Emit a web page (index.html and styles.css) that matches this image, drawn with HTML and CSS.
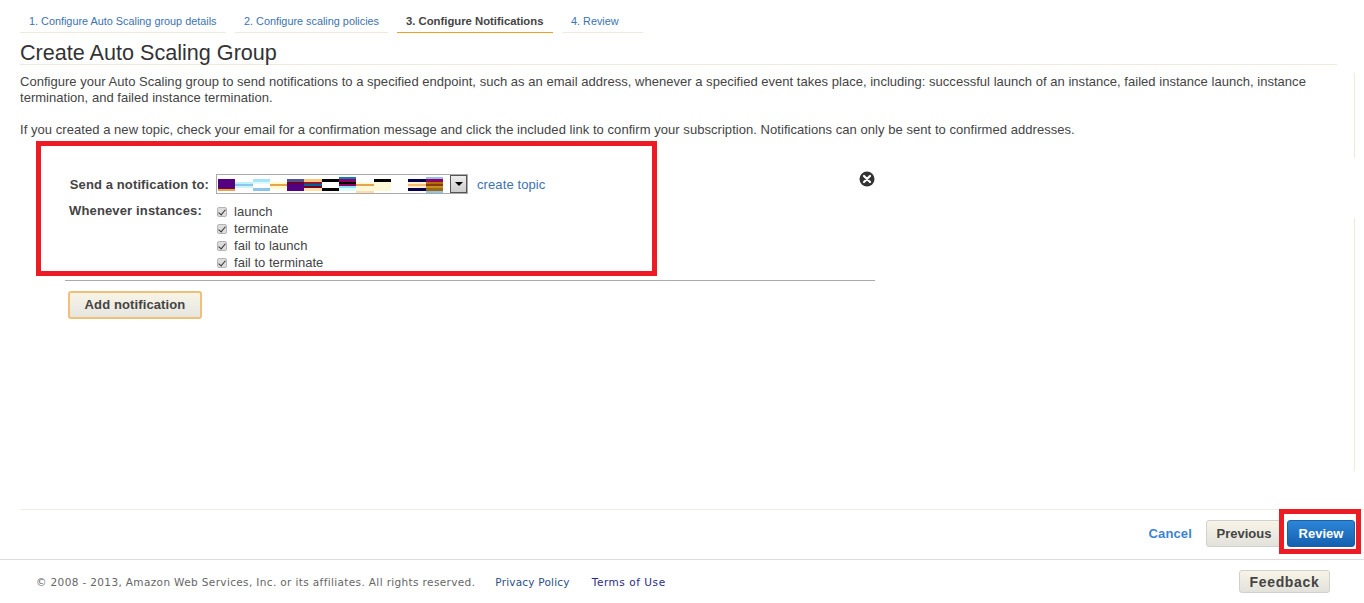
FILE: index.html
```html
<!DOCTYPE html>
<html lang="en">
<head>
<meta charset="utf-8">
<title>Create Auto Scaling Group</title>
<link rel="stylesheet" href="styles.css">
</head>
<body>
<div class="page">
  <main class="main">
    <nav class="tabs">
      <a class="tab tab-1">1. Configure Auto Scaling group details</a>
      <a class="tab tab-2">2. Configure scaling policies</a>
      <a class="tab tab-3 active">3. Configure Notifications</a>
      <a class="tab tab-4">4. Review</a>
    </nav>
    <h1 class="title">Create Auto Scaling Group</h1>
    <p class="intro first">Configure your Auto Scaling group to send notifications to a specified endpoint, such as an email address, whenever a specified event takes place, including: successful launch of an instance, failed instance launch, instance termination, and failed instance termination.</p>
    <p class="intro second">If you created a new topic, check your email for a confirmation message and click the included link to confirm your subscription. Notifications can only be sent to confirmed addresses.</p>
    <section class="notification">
      <div class="row send-row">
        <label class="send-label">Send a notification to:</label>
        <div class="select">
          <div class="strips">
            <i class="s s1"></i><i class="s s2"></i><i class="s s3"></i><i class="s s4"></i><i class="s s5"></i><i class="s s6"></i><i class="s s7"></i><i class="s s8"></i><i class="s s9"></i><i class="s s10"></i><i class="s s11"></i><i class="s s12"></i><i class="s s13"></i>
          </div>
          <span class="arrow"><span class="arrow-tip"></span></span>
        </div>
        <a class="create-topic">create topic</a>
        <svg class="remove" viewBox="0 0 16 16" width="16" height="16" aria-hidden="true"><circle cx="8" cy="8" r="7.5" fill="#333"/><path d="M5 5l6 6M11 5l-6 6" stroke="#fff" stroke-width="2.2" stroke-linecap="round"/></svg>
      </div>
      <div class="row when-row">
        <div class="when-label">Whenever instances:</div>
        <ul class="checks">
          <li><span class="cb"></span>launch</li>
          <li><span class="cb"></span>terminate</li>
          <li><span class="cb"></span>fail to launch</li>
          <li><span class="cb"></span>fail to terminate</li>
        </ul>
      </div>
    </section>
    <div class="add-wrap"><button class="btn add">Add notification</button></div>
    <div class="side-rule rule-a"></div>
    <div class="side-rule rule-b"></div>
    <div class="redbox box-a"></div>
  </main>
  <div class="actions-wrap">
    <div class="actions">
      <a class="cancel">Cancel</a>
      <button class="btn prev">Previous</button>
      <button class="btn review">Review</button>
    </div>
  </div>
  <footer class="footer">
    <span class="copy">© 2008 - 2013, Amazon Web Services, Inc. or its affiliates. All rights reserved.</span>
    <a class="flink">Privacy Policy</a>
    <a class="flink visited">Terms of Use</a>
    <button class="btn feedback">Feedback</button>
  </footer>
  <div class="redbox box-b"></div>
</div>
</body>
</html>
```
FILE: styles.css
```css
* { box-sizing: border-box; }
html, body { margin: 0; padding: 0; }
body {
  background: #fff;
  color: #444;
  font-family: "Liberation Sans", Arial, sans-serif;
  font-size: 13px;
  overflow: hidden;
}
.page {
  position: relative;
  width: 1364px;
  height: 603px;
  display: flex;
  flex-direction: column;
}
.main {
  position: relative;
  height: 509px;
  padding: 8px 0 0 20px;
}
.tabs { display: flex; gap: 9px; }
.tab {
  display: block;
  height: 25px;
  padding: 7px 0 0 9px;
  color: #3b73af;
  font-size: 10.85px;
  line-height: 13px;
  border-bottom: 1px solid #efeadb;
}
.tab-1 { width: 206px; }
.tab-2 { width: 153px; }
.tab-3 { width: 156px; }
.tab-4 { width: 81px; }
.tab.active { color: #444; font-weight: bold; font-size: 11.3px; border-bottom-color: #f0a020; }
.title {
  margin: 8px 0 0;
  width: 1317px;
  height: 24px;
  font-size: 21.6px;
  line-height: 24px;
  font-weight: normal;
  color: #333;
  border-bottom: 1px solid #efeadb;
}
.intro {
  margin: 9px 0 0;
  width: 1310px;
  font-size: 13px;
  line-height: 16px;
  letter-spacing: 0.05px;
  color: #444;
}
.intro.first { letter-spacing: 0.027px; }
.intro.second { margin-top: 16px; }
.notification {
  margin: 7px 0 0 45px;
  width: 810px;
  height: 136px;
  padding-top: 29px;
  border-bottom: 1px solid #aaa;
}
.row { display: flex; }
.send-row { align-items: center; height: 20px; position: relative; }
.send-label {
  width: 144px;
  text-align: right;
  font-weight: bold;
  font-size: 13px;
  letter-spacing: 0.12px;
  color: #444;
}
.select {
  margin-left: 7px;
  width: 252px;
  height: 20px;
  display: flex;
  justify-content: space-between;
  border: 1px solid #aaa;
  padding: 0 0 0 1px;
  background: #fff;
}
.strips { display: flex; height: 18px; }
.s { display: block; width: 17.3px; height: 18px; }
.s1 { background: linear-gradient(#fff 0 4px, #530081 4px 13px, #7a0a30 13px 14px, #e5a550 14px 16px, #fff 16px); }
.s2 { background: linear-gradient(#fff 0 7px, #bdf0fb 7px 9px, #8ec6ea 9px 11px, #cdf4fb 11px 13px, #fff 13px); }
.s3 { background: linear-gradient(#fff 0 4px, #a6e4fb 4px 7px, #dffaff 7px 9px, #fff 9px 13px, #8cc4ea 13px 16px, #fff 16px); }
.s4 { background: linear-gradient(#fff 0 7px, #fff8c8 7px 9px, #e5a550 9px 11px, #fff8c8 11px 14px, #fff 14px); }
.s5 { background: linear-gradient(#fff 0 4px, #54508a 4px 7px, #6a0030 7px 9px, #530081 9px 16px, #fff 16px); }
.s6 { background: linear-gradient(#fff 0 4px, #f8c880 4px 7px, #8a1a30 7px 9px, #0060a0 9px 11px, #7a0018 11px 13px, #ffe0b0 13px 16px, #fff 16px); }
.s7 { background: linear-gradient(#fff 0 4px, #000 4px 7px, #fff 7px 13px, #000 13px 16px, #fff 16px); }
.s8 { background: linear-gradient(#fff 0 2px, #0a80b8 2px 4px, #900060 4px 7px, #000 7px 9px, #900060 9px 11px, #80e8f8 11px 13px, #e0fbff 13px 16px, #fff 16px); }
.s9 { background: linear-gradient(#fff 0 7px, #fff8d8 7px 9px, #e5a550 9px 11px, #fff8d8 11px 16px, #ffdcb0 16px); }
.s10 { background: linear-gradient(#fff 0 4px, #000 4px 7px, #fff8d8 7px 16px, #fff 16px); }
.s11 { background: #fff; }
.s12 { background: linear-gradient(#fff 0 4px, #000050 4px 7px, #fff0d0 7px 9px, #f8b870 9px 11px, #fff0d0 11px 13px, #000050 13px 16px, #fff 16px); }
.s13 { background: linear-gradient(#fff 0 2px, #8cc4ea 2px 4px, #900060 4px 7px, #b07000 7px 9px, #8a3a10 9px 11px, #c09020 11px 13px, #a06810 13px 16px, #8cc4ea 16px); }
.arrow {
  width: 17px;
  height: 18px;
  display: flex;
  align-items: center;
  justify-content: center;
  background: linear-gradient(#eee, #ccc);
  border: 1px solid #555;
}
.arrow-tip {
  width: 0;
  height: 0;
  border-left: 4px solid transparent;
  border-right: 4px solid transparent;
  border-top: 4px solid #000;
}
.create-topic {
  margin-left: 9px;
  color: #3b73af;
  font-size: 13px;
  letter-spacing: 0.1px;
}
.remove { position: absolute; left: 794px; top: -3px; }
.when-row { margin-top: 9px; align-items: flex-start; }
.when-label {
  width: 136px;
  padding-left: 4px;
  font-weight: bold;
  font-size: 13px;
  letter-spacing: 0.15px;
  line-height: 16px;
  white-space: nowrap;
}
.checks {
  list-style: none;
  margin: 0 0 0 16px;
  padding: 0;
}
.checks li {
  display: flex;
  align-items: center;
  height: 17px;
  font-size: 13px;
  letter-spacing: 0.03px;
  color: #444;
}
.cb {
  position: relative;
  width: 10px;
  height: 10px;
  margin: 0 7px 0 0;
  background: #ddd;
  border: 1px solid #b5b5b5;
  border-radius: 2px;
}
.cb::after {
  content: "";
  position: absolute;
  left: 2px;
  top: 0;
  width: 3px;
  height: 6px;
  border-right: 1.5px solid #333;
  border-bottom: 1.5px solid #333;
  transform: rotate(40deg);
}
.add-wrap { margin: 10px 0 0 48px; }
.btn {
  font-family: "Liberation Sans", Arial, sans-serif;
  font-weight: bold;
  color: #444;
  cursor: pointer;
  padding: 0;
}
.add {
  width: 134px;
  height: 28px;
  padding-bottom: 2px;
  font-size: 13px;
  letter-spacing: 0.12px;
  border: 2px solid #f0c078;
  border-radius: 3px;
  background: linear-gradient(#f8f4e6, #e6e6e0);
}
.side-rule {
  position: absolute;
  left: 1354px;
  width: 1px;
  background: #efeadb;
}
.rule-a { top: 73px; height: 85px; }
.rule-b { top: 218px; height: 253px; }
.redbox {
  position: absolute;
  border: 5px solid #ed1c24;
  pointer-events: none;
}
.box-a { left: 36px; top: 141px; width: 621px; height: 135px; }
.box-b { left: 1279px; top: 509px; width: 82px; height: 45px; }
.actions-wrap { padding-left: 20px; }
.actions {
  height: 50px;
  display: flex;
  align-items: center;
  justify-content: flex-end;
  padding: 0 9px 2px 0;
  border-top: 1px solid #eeeee6;
}
.cancel {
  margin-right: 14px;
  color: #3b83d3;
  font-size: 13px;
  font-weight: bold;
  letter-spacing: 0.15px;
}
.prev, .review {
  height: 27px;
  font-size: 13px;
  border-radius: 3px;
}
.prev {
  width: 76px;
  border: 1px solid #d0d0d0;
  background: linear-gradient(#f8f4e6, #e2e2dc);
}
.review {
  width: 68px;
  margin-left: 5px;
  color: #fff;
  border: 1px solid #1a5fa8;
  background: linear-gradient(#2d86d8, #1560b0);
}
.footer {
  height: 44px;
  display: flex;
  align-items: center;
  padding-left: 36px;
  border-top: 1px solid #ddd;
  font-family: "DejaVu Sans", Verdana, sans-serif;
  font-size: 10.5px;
  color: #666;
}
.copy { letter-spacing: 0.36px; }
.flink { margin-left: 20px; color: #2a4f86; letter-spacing: 0.2px; }
.flink.visited { margin-left: 22px; color: #2a2a86; letter-spacing: 0.55px; }
.feedback {
  margin-left: auto;
  margin-right: 34px;
  width: 91px;
  height: 23px;
  font-size: 14px;
  letter-spacing: 0.65px;
  border: 1px solid #d0d0d0;
  border-radius: 3px;
  background: linear-gradient(#f8f4e6, #e2e2dc);
}
```
